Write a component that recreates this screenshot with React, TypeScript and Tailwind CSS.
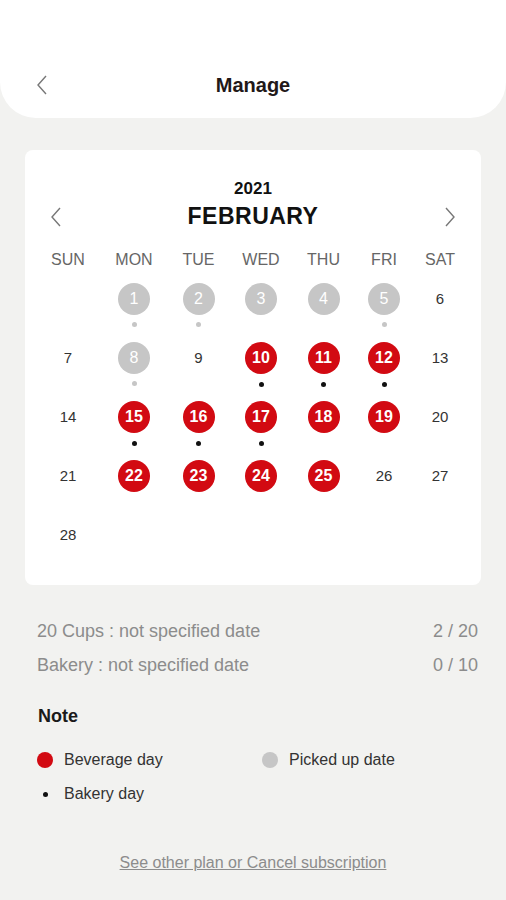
import React from "react";

type Cell = { d?: number; kind?: "red" | "gray" | "plain"; dot?: "black" | "gray" };

const rows: Cell[][] = [
  [{}, { d: 1, kind: "gray", dot: "gray" }, { d: 2, kind: "gray", dot: "gray" }, { d: 3, kind: "gray" }, { d: 4, kind: "gray" }, { d: 5, kind: "gray", dot: "gray" }, { d: 6 }],
  [{ d: 7 }, { d: 8, kind: "gray", dot: "gray" }, { d: 9 }, { d: 10, kind: "red", dot: "black" }, { d: 11, kind: "red", dot: "black" }, { d: 12, kind: "red", dot: "black" }, { d: 13 }],
  [{ d: 14 }, { d: 15, kind: "red", dot: "black" }, { d: 16, kind: "red", dot: "black" }, { d: 17, kind: "red", dot: "black" }, { d: 18, kind: "red" }, { d: 19, kind: "red" }, { d: 20 }],
  [{ d: 21 }, { d: 22, kind: "red" }, { d: 23, kind: "red" }, { d: 24, kind: "red" }, { d: 25, kind: "red" }, { d: 26 }, { d: 27 }],
  [{ d: 28 }, {}, {}, {}, {}, {}, {}],
];

const days = ["SUN", "MON", "TUE", "WED", "THU", "FRI", "SAT"];

function Chevron({ dir }: { dir: "left" | "right" }) {
  return (
    <svg width="12" height="20" viewBox="0 0 12 20" fill="none">
      {dir === "left" ? (
        <path d="M10 1 L2 10 L10 19" stroke="#777" strokeWidth="1.4" />
      ) : (
        <path d="M2 1 L10 10 L2 19" stroke="#777" strokeWidth="1.4" />
      )}
    </svg>
  );
}

function DayCell({ c }: { c: Cell }) {
  return (
    <div className="relative flex h-[59px] flex-col items-center">
      {c.d !== undefined && (
        c.kind === "red" ? (
          <div className="flex h-[32px] w-[32px] items-center justify-center rounded-full bg-[#d20a12] text-[16px] font-bold text-white">
            {c.d}
          </div>
        ) : c.kind === "gray" ? (
          <div className="flex h-[32px] w-[32px] items-center justify-center rounded-full bg-[#c6c6c6] text-[16px] text-white">
            {c.d}
          </div>
        ) : (
          <div className="flex h-[32px] w-[32px] items-center justify-center text-[15px] text-[#333]">
            {c.d}
          </div>
        )
      )}
      {c.dot && (
        <div
          className={
            c.dot === "black"
              ? "mt-[8px] h-[5px] w-[5px] rounded-full bg-[#111]"
              : "mt-[7px] h-[5px] w-[5px] rounded-full bg-[#c6c6c6]"
          }
        />
      )}
    </div>
  );
}

export default function App() {
  return (
    <div
      className="min-h-[900px] w-[506px] bg-[#f2f2f0]"
      style={{ fontFamily: '"Liberation Sans", Arial, sans-serif' }}
    >
      <div className="relative flex h-[118px] items-end justify-center rounded-b-[36px] bg-white pb-[21px]">
        <div className="absolute left-[36px] top-[75px]">
          <Chevron dir="left" />
        </div>
        <div className="text-[20px] font-bold leading-[24px] text-[#221818]">Manage</div>
      </div>

      <div className="mx-[25px] mt-[32px] h-[435px] rounded-[8px] bg-white pl-[10px] pt-[29px]">
        <div className="relative flex flex-col items-center pr-[10px]">
          <div className="text-[17px] font-bold leading-[20px] text-[#111]">2021</div>
          <div className="mt-[4px] text-[23px] font-bold leading-[26px] tracking-[0.5px] text-[#111]">FEBRUARY</div>
          <div className="absolute left-[15px] top-[28px]">
            <Chevron dir="left" />
          </div>
          <div className="absolute right-[25px] top-[28px]">
            <Chevron dir="right" />
          </div>
        </div>

        <div className="mt-[21px] grid grid-cols-[66px_66px_63px_62px_63px_58px_54px]">
          {days.map((d) => (
            <div key={d} className="text-center text-[16px] leading-[20px] text-[#666]">
              {d}
            </div>
          ))}
        </div>

        <div className="mt-[13px] grid grid-cols-[66px_66px_63px_62px_63px_58px_54px]">
          {rows.flat().map((c, i) => (
            <DayCell key={i} c={c} />
          ))}
        </div>
      </div>

      <div className="pl-[37px] pr-[28px] pt-[29px]">
        <div className="flex justify-between text-[18px] leading-[34px] text-[#8c8c8c]">
          <span>20 Cups : not specified date</span>
          <span>2 / 20</span>
        </div>
        <div className="flex justify-between text-[18px] leading-[34px] text-[#8c8c8c]">
          <span>Bakery : not specified date</span>
          <span>0 / 10</span>
        </div>

        <div className="mt-[22px] pl-[1px] text-[18px] font-bold leading-[24px] text-[#1a1a1a]">Note</div>

        <div className="mt-[15px] grid grid-cols-[225px_1fr] text-[16px] leading-[34px] text-[#333]">
          <div className="flex items-center">
            <div className="flex w-[27px] justify-start">
              <div className="h-[16px] w-[16px] rounded-full bg-[#d20a12]" />
            </div>
            <span>Beverage day</span>
          </div>
          <div className="flex items-center">
            <div className="flex w-[27px] justify-start">
              <div className="h-[16px] w-[16px] rounded-full bg-[#c6c6c6]" />
            </div>
            <span>Picked up date</span>
          </div>
          <div className="flex items-center">
            <div className="flex w-[27px] justify-start pl-[6px]">
              <div className="h-[5px] w-[5px] rounded-full bg-[#111]" />
            </div>
            <span>Bakery day</span>
          </div>
        </div>
      </div>

      <div className="mt-[40px] text-center text-[16px] leading-[24px] text-[#8c8c8c] underline">
        See other plan or Cancel subscription
      </div>
    </div>
  );
}
